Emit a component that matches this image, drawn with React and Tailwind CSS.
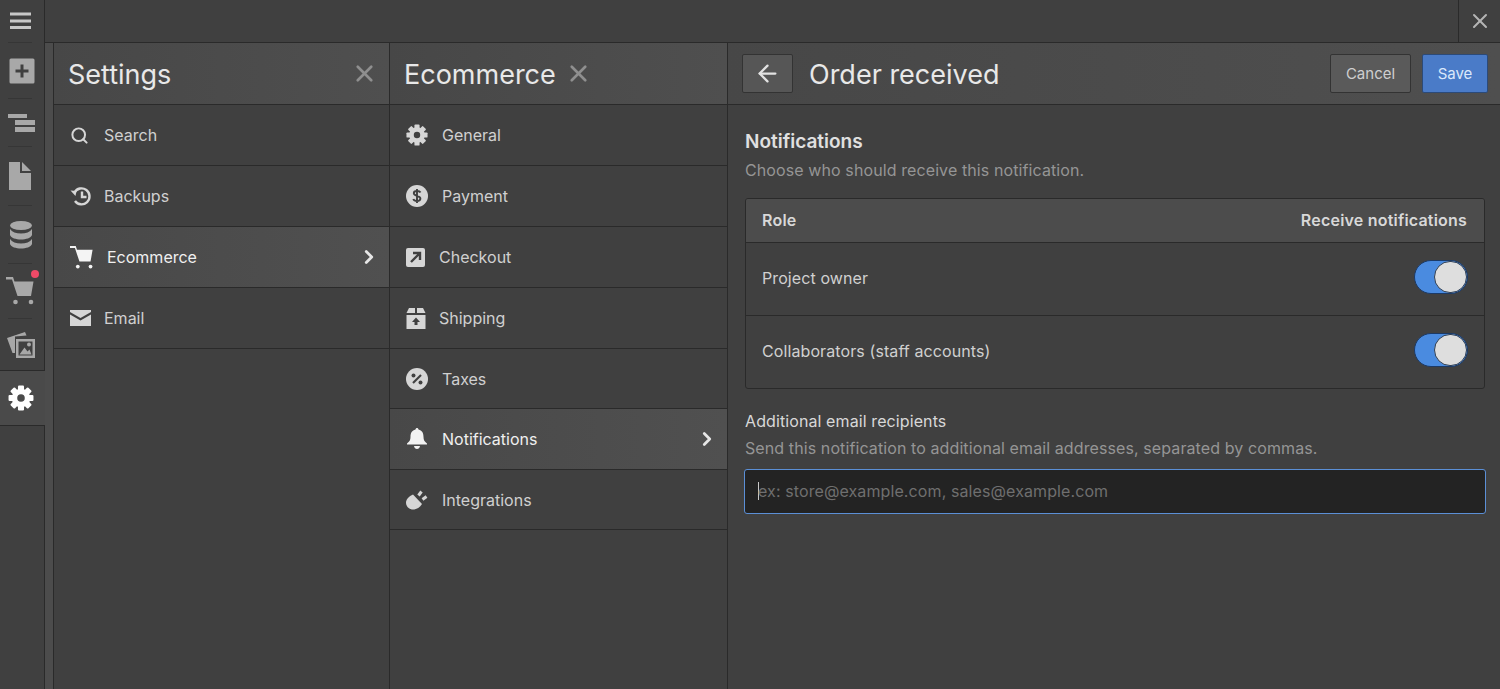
import { Search, ChevronRight, X, ArrowLeft } from "lucide-react";

function Hamburger() {
  return (
    <svg width="22" height="18" viewBox="0 0 22 18" fill="#c8c8c8">
      <rect x="0" y="0.5" width="21" height="3" />
      <rect x="0" y="7.5" width="21" height="3" />
      <rect x="0" y="14" width="21" height="3" />
    </svg>
  );
}

function AddIcon() {
  return (
    <svg width="26" height="26" viewBox="0 0 26 26">
      <rect x="0.5" y="0.5" width="25" height="25" rx="1.5" fill="#a8a8a8" />
      <path d="M13 6.5v13M6.5 13h13" stroke="#404040" strokeWidth="3" />
    </svg>
  );
}

function NavigatorIcon() {
  return (
    <svg width="28" height="18" viewBox="0 0 28 18" fill="#a8a8a8">
      <rect x="0" y="0" width="19" height="4" />
      <rect x="7" y="6" width="20" height="5" />
      <rect x="7" y="13" width="20" height="5" />
    </svg>
  );
}

function PageIcon() {
  return (
    <svg width="24" height="28" viewBox="0 0 24 28" fill="#a8a8a8">
      <path d="M0 0h11v11h11v17H0z" />
      <path d="M13 0l9 9h-9z" />
    </svg>
  );
}

function DbIcon() {
  return (
    <svg width="24" height="28" viewBox="0 0 24 28" fill="#a8a8a8">
      <ellipse cx="12" cy="4.5" rx="11" ry="4.5" />
      <path d="M1 8c2 3 6 4.5 11 4.5S21 11 23 8v6c-1 3-6 4.5-11 4.5S2 17 1 14z" />
      <path d="M1 18c2 3 6 4.5 11 4.5S21 21 23 18v5c-1 3-6 4.5-11 4.5S2 26 1 23z" />
    </svg>
  );
}

function CartIcon({ color, size = 28 }) {
  return (
    <svg width={size} height={size} viewBox="0 0 28 28" fill={color}>
      <path d="M0 0h7l1.500 4.500H27.500L25 19H11.500L6 2.500H0z" />
      <circle cx="9.500" cy="25" r="2.300" />
      <circle cx="25" cy="25" r="2.300" />
    </svg>
  );
}

function MediaIcon() {
  return (
    <svg width="28" height="26" viewBox="0 0 28 26" fill="#a8a8a8">
      <path d="M0 6L18 0l1.500 3.500L8 4.500V21H5.500z" />
      <path fillRule="evenodd" d="M9 7h19v19H9zm2.500 2.500v14h14v-14z" />
      <path d="M12.500 22.500l5-7 3 4 2-2 2 5z" />
      <circle cx="22" cy="12.500" r="2" />
    </svg>
  );
}

function Gear({ size, color }) {
  return (
    <svg width={size} height={size} viewBox="0 0 24 24">
      <g fill={color}>
        {[0, 45, 90, 135, 180, 225, 270, 315].map((a) => (
          <rect key={a} x="9.200" y="0.500" width="5.600" height="6" rx="1" transform={`rotate(${a} 12 12)`} />
        ))}
        <path fillRule="evenodd" d="M12 3.500a8.500 8.500 0 1 0 0 17 8.500 8.500 0 0 0 0-17zm0 5a3.500 3.500 0 1 1 0 7 3.500 3.500 0 0 1 0-7z" />
      </g>
    </svg>
  );
}

function HistoryIcon() {
  return (
    <svg width="22" height="22" viewBox="0 0 22 22" fill="none" stroke="#d6d6d6" strokeWidth="2.400">
      <path d="M4.500 7.500A8 8 0 1 1 5 16" />
      <path d="M0.500 5.500l6 .5-1 5z" fill="#d6d6d6" stroke="none" />
      <path d="M12 6.500V12h4.500" />
    </svg>
  );
}

function MailIcon() {
  return (
    <svg width="21" height="16" viewBox="0 0 21 16" fill="#d6d6d6">
      <path d="M0 0h21v2l-10.500 6L0 2z" />
      <path d="M0 4.500l10.500 6 10.500-6V16H0z" />
    </svg>
  );
}

function DollarIcon() {
  return (
    <svg width="22" height="22" viewBox="0 0 22 22">
      <circle cx="11" cy="11" r="11" fill="#d6d6d6" />
      <path d="M14.500 7.500C14 6.500 13 6 11 6 9 6 7.800 7 7.800 8.300c0 3 6.600 2 6.600 5.200 0 1.500-1.400 2.500-3.400 2.500-2 0-3.200-.7-3.700-2M11 4v14" fill="none" stroke="#404040" strokeWidth="1.900" />
    </svg>
  );
}

function CheckoutIcon() {
  return (
    <svg width="19" height="19" viewBox="0 0 19 19">
      <rect width="19" height="19" rx="2" fill="#d6d6d6" />
      <path d="M5 14L13 6M7 5h7v7" fill="none" stroke="#404040" strokeWidth="2.400" />
    </svg>
  );
}

function ShippingIcon() {
  return (
    <svg width="20" height="21" viewBox="0 0 20 21" fill="#d6d6d6">
      <path d="M3 0h6v5H0.500zM11 0h6l2.500 5H11z" />
      <path fillRule="evenodd" d="M0.500 7h19v14h-19zM10 9.500L6 14h2.500v3h3v-3H14z" />
    </svg>
  );
}

function TaxIcon() {
  return (
    <svg width="22" height="22" viewBox="0 0 22 22">
      <circle cx="11" cy="11" r="11" fill="#d6d6d6" />
      <path d="M15 7l-8 8" stroke="#404040" strokeWidth="2.200" />
      <circle cx="7.500" cy="7.500" r="2" fill="#404040" />
      <circle cx="14.500" cy="14.500" r="2" fill="#404040" />
    </svg>
  );
}

function BellIcon() {
  return (
    <svg width="22" height="22" viewBox="-1 0 22 22" fill="#f2f2f2">
      <path d="M10 0c.8 0 1.400.6 1.500 1.500C15 2.300 16.500 5 16.500 9c0 3 1 4.500 3.500 6.500v1H0v-1C2.500 13.500 3.500 12 3.500 9c0-4 1.500-6.700 5-7.500C8.600.6 9.200 0 10 0z" />
      <path d="M7 18h6c-.3 1.800-1.500 3-3 3s-2.700-1.200-3-3z" />
    </svg>
  );
}

function PlugIcon() {
  return (
    <svg width="22" height="22" viewBox="0 0 22 22" fill="#d6d6d6">
      <path d="M7 5.500L16 15c-2 3-5 5.500-9 5.500-4 0-7-3-7-7 0-3 3-6.500 7-8z" />
      <path d="M12.500 6.500l3-4" stroke="#d6d6d6" strokeWidth="3" />
      <path d="M16.500 10.500l4-3" stroke="#d6d6d6" strokeWidth="3" />
    </svg>
  );
}

function Divider() {
  return <div className="mx-2 h-px w-6 shrink-0 bg-[#363636]" />;
}

function Rail() {
  return (
    <div className="flex w-[45px] shrink-0 flex-col border-r border-[#2a2a2a] bg-[#404040]">
      <div className="flex h-[42px] shrink-0 items-center pl-[10px]"><Hamburger /></div>
      <Divider />
      <div className="flex h-[55px] shrink-0 items-center pl-[9px]"><AddIcon /></div>
      <Divider />
      <div className="flex h-[47px] shrink-0 items-center pl-[8px]"><NavigatorIcon /></div>
      <Divider />
      <div className="flex h-[58px] shrink-0 items-center pl-[9px]"><PageIcon /></div>
      <Divider />
      <div className="flex h-[57px] shrink-0 items-center pl-[9px]"><DbIcon /></div>
      <Divider />
      <div className="relative flex h-[54px] shrink-0 items-center pl-[6px]">
        <CartIcon color="#a8a8a8" />
        <span className="absolute left-[31px] top-[6px] h-2 w-2 rounded-full bg-[#ef4a67]" />
      </div>
      <Divider />
      <div className="flex h-[51px] shrink-0 items-center pl-[7px]"><MediaIcon /></div>
      <div className="-mr-px flex h-[56px] shrink-0 items-center border-y border-[#2a2a2a] bg-[#4a4a4a] pl-[8px]">
        <Gear size={26} color="#ffffff" />
      </div>
    </div>
  );
}

function Row({ icon, label, active, gap, short }) {
  return (
    <div className={`flex shrink-0 items-center border-b border-[#2a2a2a] pl-[16px] pr-[9px] text-[16px] ${short ? "h-[60px]" : "h-[61px]"} ${gap} ${active ? "bg-linear-to-r from-[#484848] to-[#505050] text-[#f0f0f0]" : "text-[#d0d0d0]"}`}>
      <div className="flex shrink-0 items-center">{icon}</div>
      <span className="flex-1">{label}</span>
      {active && <ChevronRight size={22} strokeWidth={3} color="#e6e6e6" />}
    </div>
  );
}

function PanelHeader({ title, closeFar }) {
  return (
    <div className={`flex h-[62px] shrink-0 items-center border-b border-[#2a2a2a] bg-linear-to-r from-[#474747] to-[#4f4f4f] pl-[14px] pr-[11px] ${closeFar ? "justify-between" : "gap-[9px]"}`}>
      <span className="pt-px text-[27px] leading-none text-[#e8e8e8]">{title}</span>
      <X size={27} strokeWidth={2.4} color="#8f8f8f" />
    </div>
  );
}

function Toggle() {
  return (
    <div className="-mt-[2px] flex h-[34px] w-[54px] items-center justify-end rounded-full border border-[#1c3a66] bg-[#4a8be0]">
      <div className="h-[32px] w-[33px] rounded-full border border-[#2f3f55] bg-[#dedede]" />
    </div>
  );
}

export default function App() {
  return (
    <div className="flex h-[689px] w-[1500px] overflow-hidden bg-[#404040] font-['Inter',sans-serif]">
      <Rail />
      <div className="flex min-w-0 flex-1 flex-col">
        <div className="flex h-[43px] shrink-0 justify-end border-b border-[#2a2a2a]">
          <div className="flex w-[42px] items-center justify-center border-l border-[#2a2a2a]">
            <X size={24} strokeWidth={2} color="#b4b4b4" />
          </div>
        </div>
        <div className="flex min-h-0 flex-1">
          <div className="w-[9px] shrink-0 border-r border-[#2a2a2a] bg-[#4c4c4c]" />
          <div className="flex w-[336px] shrink-0 flex-col border-r border-[#2a2a2a]">
            <PanelHeader title="Settings" closeFar />
            <Row gap="gap-[15px]" label="Search" icon={<Search size={19} strokeWidth={2.5} color="#d6d6d6" />} />
            <Row gap="gap-[12px]" label="Backups" icon={<HistoryIcon />} />
            <Row active gap="gap-[14px]" label="Ecommerce" icon={<CartIcon color="#f4f4f4" size={23} />} />
            <Row gap="gap-[13px]" label="Email" icon={<MailIcon />} />
          </div>
          <div className="flex w-[338px] shrink-0 flex-col border-r border-[#2a2a2a]">
            <PanelHeader title="Ecommerce" />
            <Row gap="gap-[14px]" label="General" icon={<Gear size={22} color="#d6d6d6" />} />
            <Row gap="gap-[14px]" label="Payment" icon={<DollarIcon />} />
            <Row gap="gap-[14px]" label="Checkout" icon={<CheckoutIcon />} />
            <Row gap="gap-[13px]" label="Shipping" icon={<ShippingIcon />} />
            <Row short gap="gap-[14px]" label="Taxes" icon={<TaxIcon />} />
            <Row active gap="gap-[14px]" label="Notifications" icon={<BellIcon />} />
            <Row short gap="gap-[14px]" label="Integrations" icon={<PlugIcon />} />
          </div>
          <div className="flex min-w-0 flex-1 flex-col">
            <div className="flex h-[62px] shrink-0 items-center border-b border-[#2a2a2a] bg-linear-to-r from-[#474747] to-[#4f4f4f] pl-[14px] pr-[12px]">
              <button className="flex h-[39px] w-[51px] items-center justify-center rounded-[2px] border border-[#333] bg-[#565656]">
                <ArrowLeft size={27} strokeWidth={2} color="#e2e2e2" />
              </button>
              <span className="ml-[16px] flex-1 pt-px text-[27px] leading-none text-[#e8e8e8]">Order received</span>
              <button className="h-[39px] w-[81px] rounded-[2px] border border-[#333] bg-[#5a5a5a] pt-px text-[15px] text-[#cfcfcf]">Cancel</button>
              <button className="ml-[11px] h-[39px] w-[66px] rounded-[2px] border border-[#2c4a78] bg-[#4a7bc8] pt-px text-[15px] text-[#dbe8fb]">Save</button>
            </div>
            <div className="flex flex-col pl-[17px] pr-[15px] pt-[25px] tracking-[0.1px]">
              <h2 className="text-[19px] font-semibold leading-[24px] tracking-normal text-[#e0e0e0]">Notifications</h2>
              <p className="mt-[6px] text-[16px] leading-[20px] text-[#959595]">Choose who should receive this notification.</p>
              <div className="mt-[18px] overflow-hidden rounded-[3px] border border-[#2a2a2a]">
                <div className="flex h-[44px] items-center justify-between border-b border-[#2a2a2a] bg-[#4c4c4c] px-[16px] pb-[2px] text-[16px] font-semibold tracking-[0.2px] text-[#d8d8d8]">
                  <span>Role</span>
                  <span className="mr-px">Receive notifications</span>
                </div>
                <div className="flex h-[73px] items-center justify-between border-b border-[#2a2a2a] px-[16px] pb-[2px] text-[16px] text-[#d0d0d0]">
                  <span>Project owner</span>
                  <Toggle />
                </div>
                <div className="flex h-[72px] items-center justify-between px-[16px] pb-[2px] text-[16px] text-[#d0d0d0]">
                  <span>Collaborators (staff accounts)</span>
                  <Toggle />
                </div>
              </div>
              <label className="mt-[22px] text-[16px] leading-[20px] text-[#d8d8d8]">Additional email recipients</label>
              <p className="mt-[7px] text-[16px] leading-[20px] text-[#959595]">Send this notification to additional email addresses, separated by commas.</p>
              <div className="-mx-px mt-[11px] flex h-[45px] items-center rounded-[3px] border-[1.5px] border-[#5b8fd6] bg-[#232323] pb-px pl-[14px] text-[16px] text-[#6f6f6f]">
                <span className="-ml-px -mr-px h-[18px] w-px bg-[#c8c8c8]" />
                <span>ex: store@example.com, sales@example.com</span>
              </div>
            </div>
          </div>
        </div>
      </div>
    </div>
  );
}
